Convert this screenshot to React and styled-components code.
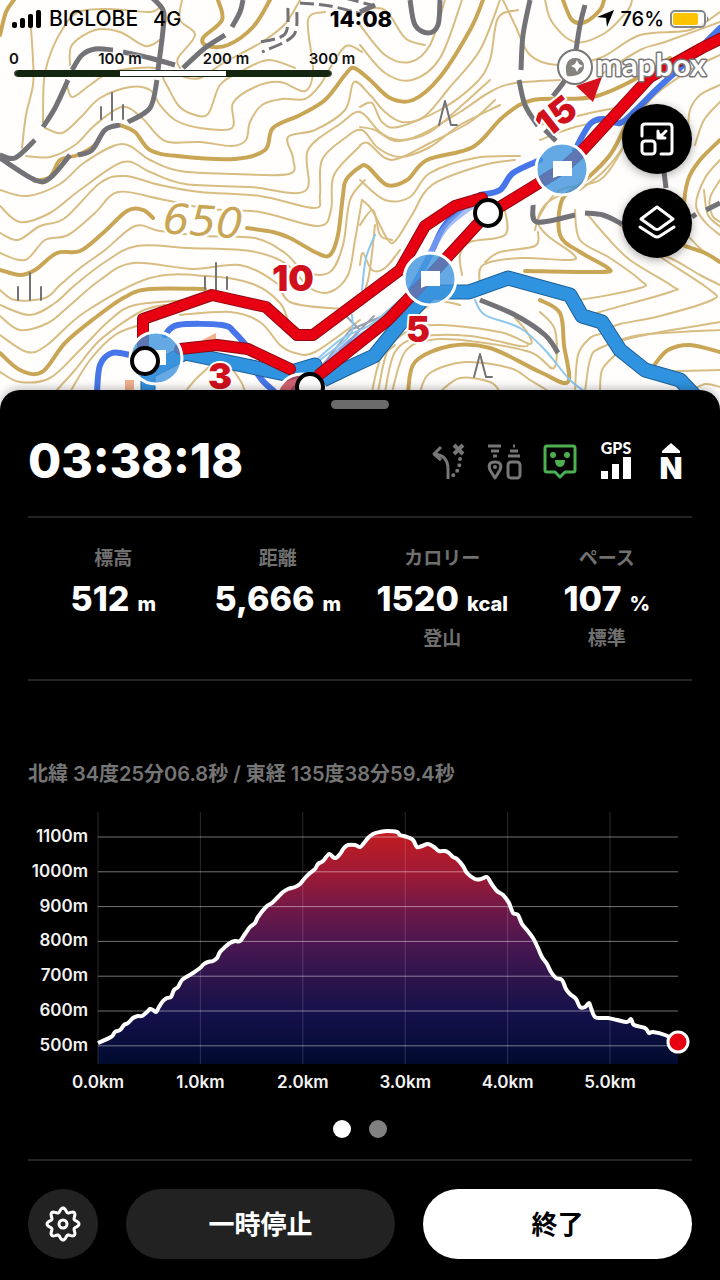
import React, { useState } from 'react'
import styled, { createGlobalStyle } from 'styled-components'

const GlobalStyle = createGlobalStyle`
  * { box-sizing: border-box; }
  body {
    margin: 0;
    background: #000;
    font-family: Inter, "Noto Sans CJK JP", sans-serif;
  }
  button { font-family: inherit; }
`

// turns "x,y x,y ..." into a smooth path
const smooth = (text) => {
  const p = text.split(' ').map((pair) => pair.split(',').map(Number))
  let d = `M${p[0]}`
  for (let i = 0; i < p.length - 1; i++) {
    const a = p[i - 1] || p[i]
    const b = p[i]
    const c = p[i + 1]
    const e = p[i + 2] || c
    d += `C${b[0] + (c[0] - a[0]) / 6},${b[1] + (c[1] - a[1]) / 6} ${c[0] - (e[0] - b[0]) / 6},${c[1] - (e[1] - b[1]) / 6} ${c}`
  }
  return d
}

/* ---------- data ---------- */

const contours = [
  '31,28 33,60 33,85 26,115 22,148',
  '43,122 44,80 50,55 62,30 78,12 110,9 150,12 162,5',
  '26,156 50,157 75,145 95,125 122,107 142,118 165,141 200,142 232,146 246,140 250,122 262,105 282,99 305,99 320,85 330,68 346,46 362,52',
  '45,128 62,133 80,118 100,98 130,87 150,90 160,105 175,120 200,128 232,128 233,103 255,87 280,82 305,91 313,70 308,20 325,12',
  '66,80 72,97 90,85 112,72 155,68 165,82 178,105 192,114 208,114 220,85 240,72 268,60 295,68',
  '70,65 72,45 95,30 120,32 145,46 160,40',
  '182,0 180,20 195,35 178,58 180,68',
  '184,77 200,78 225,62 262,42 285,24 300,0',
  '0,190 27,196 60,184 85,162 122,144 150,160 180,171 235,174 289,174 293,158 288,137 315,130 345,110 354,82 370,95 385,112 402,122 425,116 450,87 480,50 500,0',
  '0,206 20,222 50,213 80,190 123,162 150,172 185,184 250,187 305,191 308,150 340,124 360,112 380,132 400,140 430,132 460,107 490,80',
  '0,233 18,240 40,226 65,218 100,183 125,176 160,185 200,192 260,196 314,208 320,195 322,160 345,138 362,130 378,148 400,157 430,147 460,125 500,105',
  '0,253 25,260 45,240 68,235 95,213 118,192 160,199 210,209 260,212 318,226 331,210 334,175 360,146',
  '0,290 15,300 45,298 60,285 80,268 105,250 135,226 160,231 205,236 255,238 285,253 305,272 330,272 343,245 350,200 365,180',
  '0,305 30,315 55,303 75,285 105,262 137,246 190,248 250,251 285,263 310,288 330,292 348,275 355,240 362,200',
  '0,316 20,330 48,323 68,307 100,280 133,263 193,269 240,265 275,282 290,302 330,308 355,306 368,280 375,225',
  '0,335 27,352 47,345 85,312 150,278 207,276 253,284 280,303 290,325 300,333',
  '0,372 20,382 50,378 80,350 110,320 135,305 190,300',
  '55,392 75,370 100,340 140,312 165,305',
  '70,392 90,360 115,335 140,325',
  '180,315 230,312 260,322 280,345 295,353 315,352 360,320',
  '185,392 200,375 222,360 240,380 245,392',
  '360,25 385,55 410,62 430,45 445,0',
  '360,45 385,73 412,80 440,58 462,0',
  '362,10 385,10 405,38 425,45',
  '360,107 372,103 382,122 398,127 440,110 475,84 490,60 498,18 518,10',
  '360,127 375,130 395,141 420,135 460,112 490,92 515,83 560,80',
  '360,145 368,143 385,158 400,158 430,143 470,122 495,100',
  '360,180 385,200 410,197 430,173 475,158 520,156',
  '362,200 372,210 388,240 396,240 412,215 432,185 480,166 515,160',
  '360,225 373,210 380,235 392,240',
  '360,265 363,253 372,270 385,268 400,250',
  '503,0 515,25 530,55 558,65 600,58 640,35 690,30 720,12',
  '545,0 552,22 575,42 605,33 628,10 632,0',
  '600,75 640,50 665,42 720,22',
  '540,125 590,113 625,106',
  '540,140 575,127 620,118',
  '580,190 605,170 628,140 650,100 690,70 720,55',
  '535,230 540,215 560,190 600,180 622,150',
  '720,85 700,95 690,110 688,130',
  '720,102 704,120 695,145',
  '720,160 705,178 696,205 705,222 720,235',
  '720,180 710,198 712,215 720,222',
  '505,210 505,235 470,242 460,255 462,275',
  '480,285 483,265 520,258 570,260 573,254 548,236 538,222 545,205 560,195',
  '485,262 500,252 535,246 538,232',
  '575,210 580,240 610,258 640,280 640,288 575,300 560,290',
  '588,215 605,235 630,260 672,286 670,292 600,312 588,318',
  '620,225 640,242 665,260 710,290 712,300 660,316 620,324 606,330',
  '640,250 670,258 700,275 720,285',
  '690,238 702,250 720,262',
  '704,190 708,215 722,228',
  '460,305 440,302 420,312 415,330',
  '378,392 388,350 410,330 440,325 500,332 530,344 527,332 515,318',
  '385,392 395,352 420,337 470,336 520,346 528,345',
  '372,392 380,360 395,345',
  '392,392 405,352 430,340 470,341 530,352 554,368 555,330 540,312',
  '420,392 430,373 465,362 510,368 530,380 550,392',
  '440,392 460,378 490,382 500,392',
  '575,392 578,355 590,338 600,334',
  '585,392 590,360 600,348 640,336 720,322',
  '600,392 602,370 615,355',
  '608,345 640,335 720,330',
  '655,374 680,371 720,370',
  '690,392 705,384 720,387'
]

const indexContours = [
  '0,35 6,12 14,0',
  '218,0 222,20 203,38 208,46 228,45 253,27 270,0',
  '120,125 135,132 150,150 177,156 235,159 265,150 273,128 300,115 325,100 345,75 354,68 370,80 390,98 413,100 440,77 470,30 483,0',
  '35,181 50,177 60,160 78,155 95,145 103,132',
  '0,270 20,275 35,270 57,253 80,251 103,233 127,211 143,210 153,218',
  '247,228 273,232 290,238 317,253 330,255 338,235 343,195 346,180 360,167 368,167 387,185 407,180 427,160 473,147 503,117 533,100 593,97 643,75 670,58',
  '0,353 20,370 42,372 65,343 95,318 125,297 150,289 205,289',
  '563,0 572,20 585,22 600,10 604,0',
  '628,120 610,155 580,185 562,200 560,235 580,252 608,268 600,272 525,271',
  '720,140 700,160 688,180 684,210 688,235',
  '685,246 705,253 720,262',
  '540,300 560,313 564,345 568,382 540,372 490,348 450,346 415,362 408,392',
  '655,364 668,350 690,345 720,352'
]

const tracks = [
  '0,155 15,158 35,140', '43,127 55,108 68,80', '72,70 82,55 95,49 113,50', '123,52 150,58 175,65',
  '183,68 205,48 225,35', '232,27 240,12 243,0', '148,-6 163,10 163,30 158,70', '157,80 150,108 128,122',
  '120,125 105,130 92,150 78,155', '70,155 50,178 35,180 0,158',
  '410,0 415,25 428,33 438,25 440,0', '530,0 523,35 521,70', '519,80 525,105 538,126', '545,130 556,141',
  '585,5 580,25 576,50', '572,62 565,80 553,96',
  '533,205 537,222 575,215', '585,213 603,215 622,224', '692,217 696,214', '706,210 720,203',
  '480,300 515,315 545,335 558,353', '664,172 666,188', '360,12 375,5'
]

const dashedTracks = ['288,8 285,34 260,42', '297,12 293,36 262,52', '300,3 330,6 362,14', '345,-2 375,6']

const streams = [
  '540,160 513,173 500,190 480,195',
  '575,150 590,124 604,119 620,123 636,110 656,90 684,64 720,28',
  '350,345 380,325 405,300 430,255 445,225 475,197',
  '165,335 178,325 222,325 235,333 250,350',
  '97,392 100,365 112,353 130,355',
  '250,362 262,380 275,392'
]

const brooks = [
  '375,235 366,258 362,290',
  '475,300 485,315 520,328 545,350 570,380 590,395',
  '300,375 340,340 370,325 400,300',
  '320,360 350,335 352,315'
]

const redRoutes = [
  'M143 345V319L212 295L266 307L297 335H313L400 270L425 226L455 206L482 198',
  'M730 34L702 48L650 77L580 153L562 169L485 216L430 276L388 320L320 374',
  'M180 349L217 345L248 349L290 369'
]
const blueRoute = 'M148 395V372L185 353L285 374L315 365M298 392L348 368L374 356L400 324L430 292H469L508 278L570 295L582 316L602 322L620 350L645 370L680 380L697 398'

const elevation = '70,233 83,227 87,222 92,220 96,215 100,213 105,208 110,206 114,206 119,202 122,199 125,200 128,202 131,197 135,191 139,188 143,187 146,180 150,177 154,170 160,166 165,163 172,158 176,154 180,152 185,151 189,148 192,142 197,137 202,133 207,131 212,131 217,124 222,117 227,113 230,107 238,97 244,93 250,87 255,82 260,79 267,77 272,74 277,68 282,63 287,59 290,54 295,51 301,44 305,47 308,48 312,44 316,38 320,35 327,35 332,37 336,33 340,28 345,24 352,22 359,21 369,22 372,25 379,27 385,30 389,37 394,36 400,34 406,37 411,41 417,41 421,43 425,47 429,49 435,56 439,63 447,69 453,69 459,67 463,73 469,81 475,85 481,93 485,103 490,105 494,114 499,120 505,128 510,138 514,147 519,154 523,162 528,168 534,170 538,179 542,184 548,189 552,197 557,197 561,193 563,198 567,207 575,208 580,208 589,210 599,212 603,209 606,215 617,218 621,223 625,222 637,225 650,232'

const stats = [
  { label: '標高', value: '512', unit: 'm' },
  { label: '距離', value: '5,666', unit: 'm' },
  { label: 'カロリー', value: '1520', unit: 'kcal', note: '登山' },
  { label: 'ペース', value: '107', unit: '%', note: '標準' }
]

/* ---------- layout ---------- */

const Page = styled.div`
  display: flex;
  flex-direction: column;
  min-height: 100vh;
  background: #000;
`

const MapArea = styled.section`
  position: relative;
  flex: 1;
  min-height: 400px;
  background: #fff;
  overflow: hidden;
`

const MapCanvas = styled.svg`
  position: absolute;
  inset: 0;
  width: 100%;
  height: 100%;
`

const MapOverlay = styled.div`
  position: relative;
`

const StatusBar = styled.div`
  display: grid;
  grid-template-columns: 1fr auto 1fr;
  align-items: center;
  height: 37px;
  padding: 0 10px 0 12px;
  color: #000;
  font-size: 20px;
  font-weight: 500;
`

const StatusGroup = styled.div`
  display: flex;
  align-items: center;
  justify-content: ${(props) => (props.$end ? 'flex-end' : 'flex-start')};
  gap: ${(props) => (props.$end ? 6 : 7)}px;
`

const Carrier = styled.span`
  font-size: 21px;
`

const Network = styled.span`
  margin-left: 8px;
`

const Clock = styled.time`
  font-weight: 800;
  font-size: 22px;
`

const MapHeader = styled.div`
  display: flex;
  justify-content: space-between;
  padding: 8px 12px 0 14px;
`

const Scale = styled.div`
  width: 318px;
  padding-top: 5px;
`

const ScaleLabels = styled.div`
  display: grid;
  grid-template-columns: repeat(4, 1fr);
  margin: 0 -53px 2px;
  text-align: center;
  color: #111;
  font-size: 15px;
  line-height: 18px;
  font-weight: 600;
  text-shadow: 0 0 2px #fff, 0 0 2px #fff;
`

const ScaleBar = styled.div`
  display: grid;
  grid-template-columns: repeat(3, 1fr);
  height: 7px;
  border: 1px solid #14260f;
  border-radius: 4px;
  overflow: hidden;
`

const ScaleStep = styled.span`
  background: ${(props) => (props.$dark ? '#14260f' : '#fff')};
`

const MapLogo = styled.a`
  display: block;
  height: 44px;
`

const MapControls = styled.div`
  display: flex;
  flex-direction: column;
  align-items: flex-end;
  gap: 14px;
  padding: 15px 28px 0;
`

const MapButton = styled.button`
  display: grid;
  place-items: center;
  width: 70px;
  height: 70px;
  padding: 0;
  border: 0;
  border-radius: 50%;
  background: #000;
  box-shadow: 0 2px 10px rgba(0, 0, 0, 0.35);
`

const Sheet = styled.main`
  position: relative;
  margin-top: -20px;
  padding: 10px 28px 21px;
  border-radius: 20px 20px 0 0;
  background: #000;
  color: #fff;
  box-shadow: 0 -2px 8px rgba(0, 0, 0, 0.25);
`

const Handle = styled.div`
  width: 58px;
  height: 9px;
  margin: 0 auto 24px;
  border-radius: 5px;
  background: #6b6b6b;
`

const TimerRow = styled.div`
  display: flex;
  align-items: center;
  justify-content: space-between;
  height: 56px;
`

const Timer = styled.h1`
  margin: 0;
  font-size: 48px;
  line-height: 56px;
  font-weight: 800;
`

const Indicators = styled.div`
  display: flex;
  gap: 16px;

  svg { overflow: visible; }
`

const Divider = styled.hr`
  height: 2px;
  margin: ${(props) => props.$top || 27}px 0 0;
  border: 0;
  background: #242424;
`

const Stats = styled.dl`
  display: grid;
  grid-template-columns: repeat(4, 1fr);
  margin: 29px 3px 0;
  text-align: center;
`

const Stat = styled.div`
  display: flex;
  flex-direction: column;
  gap: 8px;
`

const StatLabel = styled.dt`
  color: #707070;
  font-size: 19px;
  line-height: 24px;
  font-weight: 600;
`

const StatValue = styled.dd`
  display: flex;
  align-items: baseline;
  justify-content: center;
  gap: 8px;
  margin: 0;
  font-size: 34px;
  line-height: 40px;
  font-weight: 800;
  white-space: nowrap;
`

const Unit = styled.span`
  font-size: 20px;
  line-height: 24px;
  font-weight: 800;
`

const StatNote = styled.dd`
  min-height: 24px;
  margin: 0;
  color: #707070;
  font-size: 19px;
  line-height: 24px;
  font-weight: 600;
`

const Position = styled.p`
  margin: 81px 0 24px;
  color: #757575;
  font-size: 20px;
  line-height: 24px;
  font-weight: 600;
`

const Chart = styled.svg`
  display: block;
  width: 100%;
  overflow: visible;
`

const AxisText = styled.text`
  fill: #f2f2f2;
  font-size: 17px;
  font-weight: 600;
  text-anchor: ${(props) => props.$anchor};
`

const Pager = styled.div`
  display: flex;
  justify-content: center;
  gap: 18px;
  margin-top: 26px;
`

const PageDot = styled.button`
  width: 18px;
  height: 18px;
  padding: 0;
  border: 0;
  border-radius: 50%;
  background: ${(props) => (props.$active ? '#fff' : '#808080')};
`

const Actions = styled.div`
  display: flex;
  gap: 28px;
  margin-top: 28px;
`

const ActionButton = styled.button`
  flex: 1;
  height: 70px;
  padding: 0 0 4px;
  border: 0;
  border-radius: 35px;
  background: ${(props) => (props.$light ? '#fff' : '#222')};
  color: ${(props) => (props.$light ? '#000' : '#fff')};
  font-size: 26px;
  font-weight: 700;
`

const SettingsButton = styled(ActionButton)`
  display: grid;
  place-items: center;
  flex: none;
  width: 70px;
  padding: 0;
`

/* ---------- map drawing ---------- */

const MapLabel = styled.text`
  fill: #d0101c;
  stroke: #fff;
  stroke-width: 4px;
  paint-order: stroke;
  stroke-linejoin: round;
  font-size: 36px;
  font-weight: 900;
  text-anchor: middle;
`

const HeightLabel = styled.text`
  fill: #c9a655;
  stroke: #fff;
  stroke-width: 5px;
  paint-order: stroke;
  font-family: "DejaVu Sans", sans-serif;
  font-size: 42px;
  font-style: italic;
  font-weight: 400;
`

const LogoText = styled.text`
  fill: #fff;
  stroke: #777;
  stroke-width: 3px;
  paint-order: stroke;
  stroke-linejoin: round;
  font-family: Lato, sans-serif;
  font-size: 31px;
  font-weight: 700;
`

const Landmark = ({ x, y, warm }) => (
  <g transform={`translate(${x} ${y})`}>
    <circle r="26" fill={warm ? '#c63b4c' : '#3d94dc'} fillOpacity=".8" stroke="#fff" strokeWidth="3" />
    {!warm && <path d="M-9 -8H10V7H-4L-9 9Z" fill="#fff" />}
  </g>
)

const Waypoint = ({ x, y }) => (
  <circle cx={x} cy={y} r="13" fill="#fff" stroke="#000" strokeWidth="4" />
)

const TopoMap = () => (
  <MapCanvas viewBox="0 0 720 410" preserveAspectRatio="xMidYMin slice" aria-hidden="true">
    <rect width="720" height="410" fill="#fffefc" />
    <g fill="none" strokeLinecap="round" strokeLinejoin="round">
      <g stroke="#d8bd83" strokeWidth="2">
        {contours.map((line) => <path key={line} d={smooth(line)} />)}
      </g>
      <g stroke="#c9a656" strokeWidth="4">
        {indexContours.map((line) => <path key={line} d={smooth(line)} />)}
      </g>
      <g stroke="#737377" strokeWidth="5" strokeLinecap="butt">
        {tracks.map((line) => <path key={line} d={smooth(line)} />)}
      </g>
      <g stroke="#737377" strokeWidth="3" strokeDasharray="14 5" strokeLinecap="butt">
        {dashedTracks.map((line) => <path key={line} d={smooth(line)} />)}
      </g>
      <path stroke="#737377" strokeWidth="2" d="M18 287v13M30 273v27M41 287v13M205 277v12M216 263v27M227 277v12M101 107v12M112 93v27M123 105v14M439 125l6-24 6 24h6M474 377l6-23 6 23h6" />
      <g stroke="#9aa0ad" strokeWidth="2">
        <path d="M322 366L350 330L392 312M340 350l34-34M346 316l14 14" />
      </g>
      <g stroke="#8cc7ee" strokeWidth="2">
        {brooks.map((line) => <path key={line} d={smooth(line)} />)}
      </g>
      <g stroke="#4676ea" strokeWidth="6">
        {streams.map((line) => <path key={line} d={smooth(line)} />)}
      </g>
      <path stroke="#7fa2f0" strokeWidth="6" strokeOpacity=".7" d={smooth('325,365 350,342 385,322 410,295 432,250 448,225 480,200')} />
      <path fill="#f3b08f" stroke="none" d="M202 340l14-7v10zM125 380h9v14h-9z" />
      <g stroke="#1d6099" strokeWidth="15"><path d={blueRoute} /></g>
      <g stroke="#2f93e0" strokeWidth="13"><path d={blueRoute} /></g>
      <g stroke="#8d0a12" strokeWidth="12">{redRoutes.map((d) => <path key={d} d={d} />)}</g>
      <g stroke="#e60012" strokeWidth="10">{redRoutes.map((d) => <path key={d} d={d} />)}</g>
    </g>
    <HeightLabel x="162" y="233" transform="rotate(4 162 233)">650</HeightLabel>
    <Landmark x={156} y={358} />
    <Landmark x={430} y={279} />
    <Landmark x={562} y={169} />
    <Landmark x={302} y={400} warm />
    <path d="M576 86L602 77L593 102Z" fill="#d5101c" />
    <Waypoint x={145} y={361} />
    <Waypoint x={310} y={387} />
    <Waypoint x={488} y={213} />
    <MapLabel x="293" y="291">10</MapLabel>
    <MapLabel x="418" y="342">5</MapLabel>
    <MapLabel x="220" y="389">3</MapLabel>
    <MapLabel transform="translate(564 126) rotate(-38)">15</MapLabel>
  </MapCanvas>
)

const MapboxLogo = () => (
  <svg width="152" height="44" viewBox="0 0 152 44">
    <circle cx="19" cy="22" r="17" fill="#fff" stroke="#777" strokeWidth="2" />
    <path d="M11 31C8 21 11 13 19 13A8 8 0 0 1 28 21C28 29 20 32 11 31Z" fill="#85837c" />
    <path d="M21 15l2 4 4 2-4 2-2 4-2-4-4-2 4-2Z" fill="#fff" />
    <LogoText x="40" y="31">mapbox</LogoText>
  </svg>
)

/* ---------- icons ---------- */

const Signal = () => (
  <svg width="30" height="18" viewBox="0 0 30 18">
    <rect y="12" width="5" height="6" rx="2" />
    <rect x="8" y="8" width="5" height="10" rx="2" />
    <rect x="16" y="4" width="5" height="14" rx="2" />
    <rect x="24" width="5" height="18" rx="2" />
  </svg>
)

const Battery = () => (
  <svg width="40" height="18" viewBox="0 0 40 18">
    <rect x="1" y="1" width="34" height="16" rx="4" fill="#fff" fillOpacity=".7" stroke="#85858c" strokeWidth="2" />
    <rect x="3" y="3" width="25" height="12" rx="2" fill="#fcc400" />
    <path d="M37 6q3 3 0 6Z" fill="#85858c" />
  </svg>
)

const LocationArrow = () => (
  <svg width="17" height="17" viewBox="0 0 17 17"><path d="M17 0L10 17L9 8L0 7Z" /></svg>
)

const ShrinkIcon = () => (
  <svg width="34" height="34" viewBox="0 0 34 34" fill="none" stroke="#fff" strokeWidth="3" strokeLinecap="round" strokeLinejoin="round">
    <path d="M2 14V5q0-3 3-3H29q3 0 3 3V29q0 3-3 3H21M26 9L19 16M18 9V16H25" />
    <rect x="2" y="19" width="13" height="13" rx="3" />
    <path d="M18 9V16H25Z" fill="#fff" stroke="none" />
  </svg>
)

const LayersIcon = () => (
  <svg width="38" height="36" viewBox="0 0 38 36" fill="none" stroke="#fff" strokeWidth="3" strokeLinecap="round" strokeLinejoin="round">
    <path d="M19 2L35 14L21 24Q19 25 17 24L3 14Z" />
    <path d="M2 22L16 31Q19 33 22 31L36 22" />
  </svg>
)

const RouteIcon = () => (
  <svg width="40" height="40" viewBox="0 0 40 40" fill="none" stroke="#777" strokeWidth="3">
    <path d="M20 38V28Q20 14 6 13M13 6L6 13L13 19" strokeLinejoin="round" />
    <path d="M26 4L35 13M35 4L26 13" strokeWidth="4" />
    <path d="M32 18Q32 30 24 35" strokeDasharray="0 6" strokeLinecap="round" strokeWidth="4" />
  </svg>
)

const DeviceIcon = () => (
  <svg width="40" height="40" viewBox="0 0 40 40" fill="none" stroke="#777" strokeWidth="3">
    <path d="M4 5H17M7 10H15M9 15H13M29 5H31M26 10H34M24 15H36" />
    <path d="M11 37L6 29Q3 21 11 21Q19 21 16 29Z" strokeLinejoin="round" />
    <circle cx="11" cy="26" r="2" fill="#777" stroke="none" />
    <rect x="24" y="21" width="12" height="16" rx="3" />
  </svg>
)

const BuddyIcon = () => (
  <svg width="40" height="40" viewBox="0 0 40 40" fill="none" stroke="#4caf50" strokeWidth="3" strokeLinejoin="round">
    <path d="M7 5H33Q35 5 35 7V29Q35 31 33 31H25L20 36L15 31H7Q5 31 5 29V7Q5 5 7 5Z" />
    <g fill="#4caf50" stroke="none">
      <circle cx="13" cy="14" r="3" />
      <circle cx="27" cy="14" r="3" />
      <path d="M15 19H25Q25 26 20 26Q15 26 15 19Z" />
    </g>
  </svg>
)

const GpsLabel = styled.text`
  fill: #fff;
  font-family: Lato, sans-serif;
  font-size: 16px;
  font-weight: 900;
  text-anchor: middle;
`

const GpsIcon = () => (
  <svg width="40" height="40" viewBox="0 0 40 40" fill="#fff">
    <GpsLabel x="20" y="13">GPS</GpsLabel>
    <path d="M5 30h7v8H5zM16 23h7v15h-7zM27 16h8v22h-8z" />
  </svg>
)

const NorthLabel = styled.text`
  fill: #fff;
  font-size: 30px;
  font-weight: 900;
  text-anchor: middle;
`

const NorthIcon = () => (
  <svg width="40" height="40" viewBox="0 0 40 40" fill="#fff">
    <path d="M19 2L28 10V12H10V10Z" />
    <NorthLabel x="19" y="38">N</NorthLabel>
  </svg>
)

const gearPath = Array.from({ length: 97 }, (_, i) => {
  const angle = (i / 96) * Math.PI * 2
  const r = 14 + 2 * Math.cos(angle * 8)
  return `${i ? 'L' : 'M'}${18 + r * Math.sin(angle)} ${18 - r * Math.cos(angle)}`
}).join('')

const GearIcon = () => (
  <svg width="36" height="36" viewBox="0 0 36 36" fill="none" stroke="#fff" strokeWidth="3" strokeLinejoin="round">
    <path d={`${gearPath}Z`} />
    <circle cx="18" cy="18" r="4" />
  </svg>
)

/* ---------- chart ---------- */

const ElevationChart = () => {
  const line = smooth(elevation)
  const heights = [1100, 1000, 900, 800, 700, 600, 500]
  const gridY = (height) => 27 + (1100 - height) * 0.348
  const gridX = (km) => 70 + km * 102.4

  return (
    <Chart viewBox="0 0 664 284" role="img" aria-label="標高グラフ">
      <defs>
        <linearGradient id="elevation" gradientUnits="userSpaceOnUse" x1="0" y1="20" x2="0" y2="254">
          <stop offset="0" stopColor="#c41c20" />
          <stop offset=".18" stopColor="#a01a34" />
          <stop offset=".34" stopColor="#6f1848" />
          <stop offset=".5" stopColor="#471650" />
          <stop offset=".65" stopColor="#2a144b" />
          <stop offset=".8" stopColor="#12104a" />
          <stop offset="1" stopColor="#000b2e" />
        </linearGradient>
      </defs>
      <path d={`${line}V254H70Z`} fill="url(#elevation)" />
      {heights.map((height) => (
        <g key={height}>
          <path d={`M70 ${gridY(height)}H650`} stroke="#fff" strokeOpacity=".45" />
          <AxisText x="60" y={gridY(height) + 5} $anchor="end">{height}m</AxisText>
        </g>
      ))}
      {[0, 1, 2, 3, 4, 5].map((km) => (
        <g key={km}>
          <path d={`M${gridX(km)} 2V254`} stroke="#fff" strokeOpacity=".16" />
          <AxisText x={gridX(km)} y="278" $anchor="middle">{km}.0km</AxisText>
        </g>
      ))}
      <path d={line} fill="none" stroke="#fff" strokeWidth="4" strokeLinejoin="round" />
      <circle cx="650" cy="232" r="10" fill="#e60012" stroke="#fff" strokeWidth="3" />
    </Chart>
  )
}

const App = () => {
  const [page, setPage] = useState(0)

  return (
    <Page>
      <GlobalStyle />
      <MapArea>
        <TopoMap />
        <MapOverlay>
          <StatusBar>
            <StatusGroup>
              <Signal />
              <Carrier>BIGLOBE</Carrier>
              <Network>4G</Network>
            </StatusGroup>
            <Clock>14:08</Clock>
            <StatusGroup $end>
              <LocationArrow />
              <span>76%</span>
              <Battery />
            </StatusGroup>
          </StatusBar>
          <MapHeader>
            <Scale>
              <ScaleLabels>
                <span>0</span>
                <span>100 m</span>
                <span>200 m</span>
                <span>300 m</span>
              </ScaleLabels>
              <ScaleBar>
                <ScaleStep $dark />
                <ScaleStep />
                <ScaleStep $dark />
              </ScaleBar>
            </Scale>
            <MapLogo href="#mapbox" aria-label="mapbox"><MapboxLogo /></MapLogo>
          </MapHeader>
          <MapControls>
            <MapButton type="button" aria-label="縮小"><ShrinkIcon /></MapButton>
            <MapButton type="button" aria-label="レイヤー"><LayersIcon /></MapButton>
          </MapControls>
        </MapOverlay>
      </MapArea>

      <Sheet>
        <Handle />
        <TimerRow>
          <Timer>03:38:18</Timer>
          <Indicators>
            <RouteIcon />
            <DeviceIcon />
            <BuddyIcon />
            <GpsIcon />
            <NorthIcon />
          </Indicators>
        </TimerRow>
        <Divider />
        <Stats>
          {stats.map((stat) => (
            <Stat key={stat.label}>
              <StatLabel>{stat.label}</StatLabel>
              <StatValue>{stat.value}<Unit>{stat.unit}</Unit></StatValue>
              <StatNote>{stat.note}</StatNote>
            </Stat>
          ))}
        </Stats>
        <Divider $top={28} />
        <Position>北緯 34度25分06.8秒 / 東経 135度38分59.4秒</Position>
        <ElevationChart />
        <Pager>
          {[0, 1].map((i) => (
            <PageDot key={i} type="button" aria-label={`${i + 1}ページ`} $active={page === i} onClick={() => setPage(i)} />
          ))}
        </Pager>
        <Divider $top={21} />
        <Actions>
          <SettingsButton type="button" aria-label="設定"><GearIcon /></SettingsButton>
          <ActionButton type="button">一時停止</ActionButton>
          <ActionButton type="button" $light>終了</ActionButton>
        </Actions>
      </Sheet>
    </Page>
  )
}

export default App
